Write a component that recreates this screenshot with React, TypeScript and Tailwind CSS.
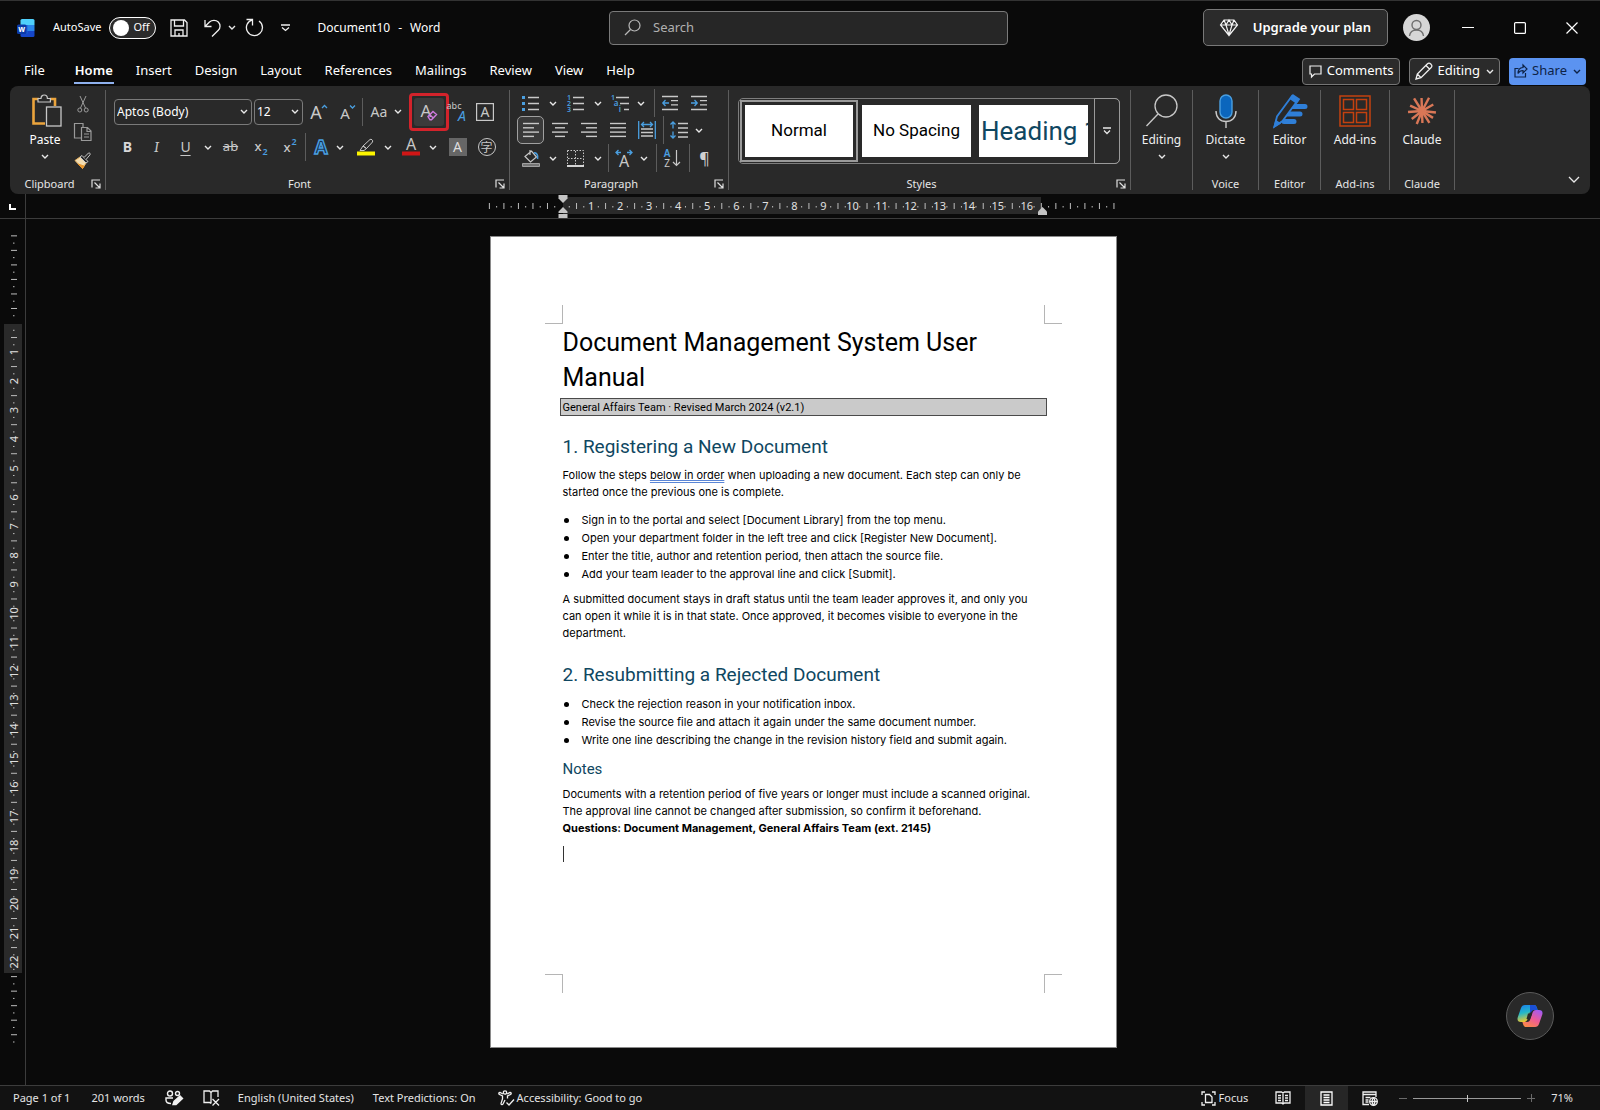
import type { ReactNode } from "react";

const UI = "font-['Noto_Sans','Open_Sans',sans-serif]";
const DISPLAY = "font-[Roboto,'Open_Sans',sans-serif]";
const BODY = "font-[Inter,Roboto,sans-serif]";

const GREY = "#c8c8c8";
const BLUE = "#4a9fe0";
const UI_FACE = "'Noto Sans', sans-serif";

type IconProps = {
  w?: number;
  h?: number;
  children: ReactNode;
  color?: string;
  sw?: number;
};

function Icon({ w = 18, h = 18, children, color = GREY, sw = 1 }: IconProps) {
  return (
    <svg
      width={w}
      height={h}
      viewBox={`0 0 ${w} ${h}`}
      fill="none"
      stroke={color}
      strokeWidth={sw}
      className="shrink-0 overflow-visible"
      aria-hidden="true"
    >
      {children}
    </svg>
  );
}

function Letter({ x, y, size, fill = GREY, children, weight = 400, italic = false }: {
  x: number;
  y: number;
  size: number;
  fill?: string;
  children: string;
  weight?: number;
  italic?: boolean;
}) {
  return (
    <text
      x={x}
      y={y}
      fontSize={size}
      fill={fill}
      stroke="none"
      textAnchor="middle"
      fontWeight={weight}
      fontStyle={italic ? "italic" : "normal"}
      fontFamily={UI_FACE}
    >
      {children}
    </text>
  );
}

function Chevron({ color = "#e8e8e8" }: { color?: string }) {
  return (
    <Icon w={8} h={5} color={color} sw={1.4}>
      <path d="M1 1l3 3 3-3" />
    </Icon>
  );
}

type ToolProps = { label: string; children: ReactNode; className?: string };

function Tool({ label, children, className = "w-[29px]" }: ToolProps) {
  return (
    <button type="button" aria-label={label} className={`flex h-7 shrink-0 items-center justify-center ${className}`}>
      {children}
    </button>
  );
}

function More({ label, className = "w-4" }: { label: string; className?: string }) {
  return (
    <Tool label={label} className={className}>
      <Chevron />
    </Tool>
  );
}

function Rule({ className = "mx-1" }: { className?: string }) {
  return <span className={`h-7 w-px shrink-0 bg-[#5c5c5c] ${className}`} />;
}

function Launcher({ label }: { label: string }) {
  return (
    <button type="button" aria-label={label} className="absolute right-1 bottom-0 flex h-3 items-center">
      <Icon w={10} h={10} color="#e0e0e0" sw={1.2}>
        <path d="M1 8.500V1h8M3.500 3.500l5 5M9 4.500V9H4.500" />
      </Icon>
    </button>
  );
}

type GroupProps = { label: string; className: string; launcher?: boolean; children: ReactNode };

function Group({ label, className, launcher = false, children }: GroupProps) {
  return (
    <section className={`relative mt-1 flex h-[100px] shrink-0 flex-col border-r border-[#5c5c5c] ${className}`}>
      <div className="min-h-0 flex-1">{children}</div>
      <h2 className={`h-3 text-center text-[11px] leading-3 text-[#e6e6e6] ${launcher ? "pr-4" : ""}`}>{label}</h2>
      {launcher && <Launcher label={`${label} settings`} />}
    </section>
  );
}

function WordLogo() {
  return (
    <Icon w={18} h={18}>
      <g stroke="none">
        <path d="M5 0h11a1.500 1.500 0 0 1 1.500 1.500V6H3.500V1.500A1.500 1.500 0 0 1 5 0z" fill="#4fd0fb" />
        <path d="M3.500 6h14v6h-14z" fill="#2a86ea" />
        <path d="M3.500 12h14v4.500A1.500 1.500 0 0 1 16 18H5a1.500 1.500 0 0 1-1.500-1.500z" fill="#1546c8" />
        <path d="M3.500 6h7v8.500h-7z" fill="#1c62d8" />
        <rect x="0" y="5.500" width="9.500" height="9.500" rx="1.500" fill="#0b3aa8" />
      </g>
      <Letter x={4.800} y={13} size={8} fill="#fff" weight={700}>w</Letter>
    </Icon>
  );
}

function TitleBar() {
  return (
    <header className="grid h-[53px] grid-cols-[1fr_minmax(200px,399px)_1fr] items-center pl-[17px]">
      <div className="flex items-center">
        <WordLogo />
        <label className="ml-[18px] flex items-center gap-2 text-[11px]">
          AutoSave
          <input type="checkbox" role="switch" className="sr-only" />
          <span className="flex h-[22px] w-[47px] items-center gap-1 rounded-full border border-white bg-[#2b2b2b] px-[3px]">
            <span className="size-4 shrink-0 rounded-full bg-white" />
            <span>Off</span>
          </span>
        </label>
        <button type="button" aria-label="Save" className="ml-[14px]">
          <Icon w={18} h={18} color="#f0f0f0" sw={1.3}>
            <path d="M1 1h13.500L17 3.500V17H1zM4.500 1v6h9V1M5 17v-6h8v6M9 17v-3" />
          </Icon>
        </button>
        <button type="button" aria-label="Undo" className="ml-4">
          <Icon w={17} h={18} color="#f0f0f0" sw={1.3}>
            <path d="M1 1v6.500h6.500M1 7.500L5.500 3C8 .8 12 .8 14.300 3c2.300 2.400 2.300 6 0 8.300L8 17.500" />
          </Icon>
        </button>
        <button type="button" aria-label="Undo history" className="ml-[7px]">
          <Chevron />
        </button>
        <button type="button" aria-label="Redo" className="ml-[9px]">
          <Icon w={19} h={19} color="#f0f0f0" sw={1.3}>
            <path d="M1.500 1.500H7.500V7.500M7.500 1.800A8 8 0 1 0 14 3" />
          </Icon>
        </button>
        <button type="button" aria-label="Customize toolbar" className="ml-[17px]">
          <Icon w={9} h={8} color="#f0f0f0" sw={1.3}>
            <path d="M0 1h9M1 3.500l3.500 3 3.500-3" />
          </Icon>
        </button>
        <h1 className="ml-[27px] flex gap-2 text-xs">
          <span>Document10</span>
          <span>-</span>
          <span>Word</span>
        </h1>
      </div>
      <div className="flex h-[34px] items-center gap-3 rounded border border-[#7a7a7a] bg-[#262626] px-[14px]">
        <Icon w={17} h={17} color="#b8b8b8" sw={1.200}>
          <circle cx="10.500" cy="6.500" r="5.500" />
          <path d="M6.500 10.500L1 16" />
        </Icon>
        <input
          aria-label="Search"
          placeholder="Search"
          className="min-w-0 flex-1 bg-transparent text-[13px] outline-none placeholder:text-[#b0b0b0]"
        />
      </div>
      <div className="flex items-center justify-end pr-[2px]">
        <button
          type="button"
          className="flex h-[37px] items-center gap-[15px] rounded-[5px] border border-[#787878] bg-[#2b2b2b] px-4 text-[13px] font-semibold"
        >
          <Icon w={18} h={17} color="#f4f4f4" sw={1.200}>
            <path d="M4 1h10l3.500 5L9 16.500.5 6zM.5 6h17M4 1l2 5 3 10 3-10 2-5M6 6l3-5 3 5" />
          </Icon>
          Upgrade your plan
        </button>
        <button type="button" aria-label="Account" className="ml-[15px] flex size-[27px] items-center justify-center rounded-full bg-[#d6d6d6]">
          <Icon w={17} h={18} color="#6e6e6e" sw={1.400}>
            <circle cx="8.500" cy="6" r="4.500" />
            <path d="M1.500 17c.5-4 3.500-6 7-6s6.500 2 7 6" />
          </Icon>
        </button>
        <button type="button" aria-label="Minimize" className="ml-3 flex h-8 w-[52px] items-center justify-center">
          <Icon w={12} h={12} color="#fff"><path d="M0 5.500h12" /></Icon>
        </button>
        <button type="button" aria-label="Maximize" className="flex h-8 w-[52px] items-center justify-center">
          <Icon w={12} h={12} color="#fff" sw={1.200}><rect x=".6" y=".6" width="10.800" height="10.800" rx="1" /></Icon>
        </button>
        <button type="button" aria-label="Close" className="flex h-8 w-[52px] items-center justify-center">
          <Icon w={12} h={12} color="#fff" sw={1.200}><path d="M.5.5l11 11M11.500.5l-11 11" /></Icon>
        </button>
      </div>
    </header>
  );
}

const tabs = ["File", "Home", "Insert", "Design", "Layout", "References", "Mailings", "Review", "View", "Help"];

function TabBar() {
  return (
    <nav className="flex h-8 items-center gap-px pt-0.5 pr-[14px] pl-[13px] text-[13px]">
      {tabs.map((tab) => (
        <button
          key={tab}
          type="button"
          className={`relative h-6 px-[11px] ${tab === "File" ? "mr-[7px]" : ""} ${tab === "Home" ? "font-semibold" : ""}`}
        >
          {tab}
          {tab === "Home" && <span className="absolute inset-x-[10px] -bottom-px h-0.5 bg-[#8fb1ee]" />}
        </button>
      ))}
      <div className="ml-auto flex items-center gap-[9px]">
        <button type="button" className="flex h-[27px] items-center gap-[5px] rounded-[4px] border border-[#757575] bg-[#2b2b2b] px-[6px]">
          <Icon w={13} h={13} color="#f0f0f0" sw={1.200}>
            <path d="M1 1h11v8H5.500L2.500 12V9H1z" />
          </Icon>
          Comments
        </button>
        <button type="button" className="flex h-[27px] items-center gap-1 rounded-[4px] border border-[#757575] bg-[#2b2b2b] px-[5px]">
          <Icon w={18} h={18} color="#f0f0f0" sw={1.300}>
            <path d="M1 17l1.300-5L12.500 1.800a2 2 0 0 1 3 0l.7.700a2 2 0 0 1 0 3L6 15.700zM11 3.500l3.500 3.500M2.300 12L6 15.700" />
          </Icon>
          Editing
          <span className="ml-[2px]"><Chevron /></span>
        </button>
        <button type="button" className="flex h-[27px] items-center gap-1 rounded-[4px] bg-[#5b93f1] px-[5px] text-[#0e2347]">
          <Icon w={14} h={14} color="#0e2347" sw={1.200}>
            <path d="M4.500 4.500H1V13h10.500V9M9 1l4 4-4 4V6.500C6.500 6.500 5 7.500 4 9.500c0-3.500 2-5.800 5-6z" />
          </Icon>
          Share
          <span className="ml-[2px]"><Chevron color="#0e2347" /></span>
        </button>
      </div>
    </nav>
  );
}

function ClipboardGroup() {
  return (
    <Group label="Clipboard" className="w-[96px]" launcher>
      <div className="flex pl-[14px]">
        <button type="button" className="flex w-[42px] flex-col items-center pt-1 text-xs">
          <Icon w={30} h={34}>
            <path d="M9 5H3.500v24.500H15M20 5h5v7" stroke="#eba43c" strokeWidth="2.600" />
            <path d="M8 8V4.500h3C11 2.500 12.500 1 14.200 1s3.200 1.500 3.200 3.500h3V8z" fill="#292929" strokeWidth="1.200" />
            <rect x="16.500" y="13" width="14.500" height="19" fill="#292929" strokeWidth="1.300" />
          </Icon>
          <span className="mt-1 mb-[6px] leading-4">Paste</span>
          <Chevron />
        </button>
        <div className="ml-[2px] flex flex-col">
          <Tool label="Cut">
            <Icon w={12} h={17} color="#9a9a9a">
              <path d="M3 0l5.500 12M9 0L3.500 12" />
              <circle cx="2.800" cy="14" r="2" />
              <circle cx="9.200" cy="14" r="2" />
            </Icon>
          </Tool>
          <Tool label="Copy">
            <Icon w={18} h={18} color="#9a9a9a" sw={1.200}>
              <path d="M7 15H.5V.5H9V4" />
              <path d="M7.500 4.500h6l3.500 3.500v9.500H7.500zM13 4.500V8.500h4M10 11h5M10 14h5" />
            </Icon>
          </Tool>
          <Tool label="Format painter">
            <Icon w={17} h={17}>
              <path d="M1 8.500l5-3.500 6 6-3.500 5.500z" fill="#f2dcb0" stroke="#e9b565" />
              <path d="M4 12l6 2-1.500 2.500z" fill="#e8962c" stroke="#e8962c" />
              <path d="M6 5l2-1.500 6 6L12 11z" fill="#292929" />
              <path d="M10 5.500L14.500 1c.8-.6 2.300.6 1.500 1.800L12 7.500" fill="#292929" />
            </Icon>
          </Tool>
        </div>
      </div>
    </Group>
  );
}

function FontGroup() {
  return (
    <Group label="Font" className="w-[404px]" launcher>
      <div className="flex h-[43px] items-center pl-2">
        <div className="relative flex h-[26px] w-[138px] items-center rounded-[4px] border border-[#7a7a7a]">
          <select aria-label="Font family" className="h-full w-full appearance-none bg-transparent pl-[2px] text-xs text-white">
            <option>Aptos (Body)</option>
          </select>
          <span className="pointer-events-none absolute right-[3px]"><Chevron /></span>
        </div>
        <div className="relative ml-[2px] flex h-[26px] w-[49px] items-center rounded-[4px] border border-[#7a7a7a]">
          <select aria-label="Font size" className="h-full w-full appearance-none bg-transparent pl-[2px] text-xs text-white">
            <option>12</option>
          </select>
          <span className="pointer-events-none absolute right-[3px]"><Chevron /></span>
        </div>
        <Tool label="Grow font" className="ml-px w-[29px]">
          <Icon w={17} h={16}>
            <Letter x={6} y={15} size={18}>A</Letter>
            <path d="M12 4l2.500-2.500L17 4" stroke={BLUE} strokeWidth="1.300" />
          </Icon>
        </Tool>
        <Tool label="Shrink font">
          <Icon w={17} h={16}>
            <Letter x={6} y={15} size={15}>A</Letter>
            <path d="M11 1.500L13.500 4 16 1.500" stroke={BLUE} strokeWidth="1.300" />
          </Icon>
        </Tool>
        <Rule className="mx-0" />
        <Tool label="Change case" className="ml-[5px] w-[22px]">
          <span className="text-sm text-[#c8c8c8]">Aa</span>
        </Tool>
        <More label="Change case options" />
        <div className="ml-[3px] rounded-[4px] border-3 border-[#d3232b] p-[2px]">
          <Tool label="Clear formatting" className="w-[30px] rounded-[3px] bg-[#3b3b3b]">
            <Icon w={18} h={18}>
              <Letter x={6} y={14} size={17}>A</Letter>
              <path d="M8 13.500L13 8.500l3.500 3-5 5.300H10zM9.800 11.800l3.500 3.200" stroke="#cf7be0" strokeWidth="1.400" />
            </Icon>
          </Tool>
        </div>
        <Tool label="Phonetic guide" className="w-[19px]">
          <Icon w={19} h={18}>
            <Letter x={5} y={6} size={9}>abc</Letter>
            <Letter x={13} y={18} size={14} fill={BLUE} italic>A</Letter>
          </Icon>
        </Tool>
        <Tool label="Character border" className="ml-0.5 w-[29px]">
          <Icon w={18} h={18}>
            <rect x=".6" y=".6" width="16.800" height="16.800" strokeWidth="1.200" />
            <Letter x={9} y={14} size={14}>A</Letter>
          </Icon>
        </Tool>
      </div>
      <div className="flex h-7 items-center pl-[7px]">
        <Tool label="Bold"><b className="text-sm text-[#d8d8d8]">B</b></Tool>
        <Tool label="Italic"><i className="font-serif text-[15px] text-[#c8c8c8]">I</i></Tool>
        <Tool label="Underline"><span className="text-sm text-[#c8c8c8] underline underline-offset-3">U</span></Tool>
        <More label="Underline options" />
        <Tool label="Strikethrough"><s className="text-[13px] text-[#c8c8c8]">ab</s></Tool>
        <Tool label="Subscript">
          <Icon w={14} h={14}>
            <Letter x={5} y={11} size={13} weight={500}>x</Letter>
            <Letter x={12} y={15} size={9} fill={BLUE} weight={600}>2</Letter>
          </Icon>
        </Tool>
        <Tool label="Superscript">
          <Icon w={14} h={14}>
            <Letter x={5} y={12} size={13} weight={500}>x</Letter>
            <Letter x={12} y={5} size={9} fill={BLUE} weight={600}>2</Letter>
          </Icon>
        </Tool>
        <Rule className="mx-0.5" />
        <Tool label="Text effects" className="w-[26px]">
          <Icon w={18} h={18}>
            <text x="9" y="16" fontSize="19" textAnchor="middle" fontWeight="700" fontFamily={UI_FACE} fill="#16324a" stroke={BLUE} strokeWidth="1.400">A</text>
          </Icon>
        </Tool>
        <More label="Text effects options" className="w-3" />
        <Tool label="Highlight color" className="ml-[5px] w-[29px]">
          <Icon w={18} h={18}>
            <path d="M6 8l7-6.500c1-.9 3.500.8 2.500 2.500L9.500 10.500zM6 8l3.500 2.500L7 12.500H3z" />
            <path d="M0 15.500h18" stroke="#fdf500" strokeWidth="4" />
          </Icon>
        </Tool>
        <More label="Highlight options" />
        <Tool label="Font color">
          <Icon w={18} h={18}>
            <Letter x={9} y={12} size={16}>A</Letter>
            <path d="M0 15.500h18" stroke="#d01616" strokeWidth="4" />
          </Icon>
        </Tool>
        <More label="Font color options" />
        <Tool label="Character shading" className="ml-0.5 w-[29px]">
          <span className="flex size-[18px] items-center justify-center bg-[#666] text-sm text-[#ddd]">A</span>
        </Tool>
        <Tool label="Enclose characters">
          <span className="flex size-[18px] items-center justify-center rounded-full border border-[#c8c8c8] font-['Noto_Sans_CJK_KR',sans-serif] text-xs leading-none text-[#c8c8c8]">字</span>
        </Tool>
      </div>
    </Group>
  );
}

function Lines({ rows }: { rows: [number, number][] }) {
  return (
    <Icon w={16} h={16} sw={1.400}>
      {rows.map(([from, to], i) => (
        <path key={i} d={`M${from} ${1.500 + i * 4.300}H${to}`} />
      ))}
    </Icon>
  );
}

function ParagraphGroup() {
  return (
    <Group label="Paragraph" className="w-[219px]" launcher>
      <div className="flex h-[26px] items-center pl-[6px]">
        <Tool label="Bullets">
          <Icon w={17} h={17} sw={1.400}>
            <path d="M6 2.500h11M6 8.500h11M6 14.500h11" />
            <path d="M0 1h3v3H0zM0 7h3v3H0zM0 13h3v3H0z" fill={BLUE} stroke="none" />
          </Icon>
        </Tool>
        <More label="Bullet options" />
        <Tool label="Numbering">
          <Icon w={17} h={17} sw={1.400}>
            <path d="M6 2.500h11M6 8.500h11M6 14.500h11" />
            <Letter x={2} y={5} size={7} fill={BLUE} weight={600}>1</Letter>
            <Letter x={2} y={11} size={7} fill={BLUE} weight={600}>2</Letter>
            <Letter x={2} y={17} size={7} fill={BLUE} weight={600}>3</Letter>
          </Icon>
        </Tool>
        <More label="Numbering options" />
        <Tool label="Multilevel list">
          <Icon w={17} h={17} sw={1.400}>
            <path d="M4 2.500h13M8 8.500h9M12 14.500h5" />
            <Letter x={1} y={5} size={7} fill={BLUE} weight={600}>1</Letter>
            <Letter x={4} y={11} size={8} fill={BLUE} weight={600}>a</Letter>
            <Letter x={8} y={17} size={8} fill={BLUE} weight={600}>i</Letter>
          </Icon>
        </Tool>
        <More label="Multilevel options" className="w-3" />
        <Rule className="ml-[7px]" />
        <Tool label="Decrease indent">
          <Icon w={16} h={16} sw={1.300}>
            <path d="M0 1.500h16M9 5.700h7M9 9.900h7M0 14.500h16" />
            <path d="M7 8H1M3.500 5L.8 8l2.700 3" stroke={BLUE} />
          </Icon>
        </Tool>
        <Tool label="Increase indent">
          <Icon w={16} h={16} sw={1.300}>
            <path d="M0 1.500h16M9 5.700h7M9 9.900h7M0 14.500h16" />
            <path d="M0 8h6M3.500 5l2.700 3-2.700 3" stroke={BLUE} />
          </Icon>
        </Tool>
      </div>
      <div className="flex h-7 items-center pl-[7px]">
        <Tool label="Align left" className="mr-px w-[27px] rounded-[5px] border border-[#a0a0a0] bg-[#3a3a3a]">
          <Lines rows={[[0, 16], [0, 11], [0, 16], [0, 11]]} />
        </Tool>
        <Tool label="Center"><Lines rows={[[0, 16], [3, 13], [0, 16], [3, 13]]} /></Tool>
        <Tool label="Align right"><Lines rows={[[0, 16], [5, 16], [0, 16], [5, 16]]} /></Tool>
        <Tool label="Justify"><Lines rows={[[0, 16], [0, 16], [0, 16], [0, 16]]} /></Tool>
        <Tool label="Distributed">
          <Icon w={18} h={18} sw={1.300}>
            <path d="M3 8h12M3 11.500h12M3 15h12" />
            <path d="M.7 0v18M17.300 0v18M3.500 3.500h11M6 1L3.500 3.500 6 6M12 1l2.500 2.500L12 6" stroke={BLUE} />
          </Icon>
        </Tool>
        <Rule className="ml-0.5" />
        <Tool label="Line spacing">
          <Icon w={18} h={18} sw={1.300}>
            <path d="M8 2.500h10M8 7h10M8 11.500h10M8 16h10" />
            <path d="M3 1v6.500M.5 3.500L3 1l2.500 2.500M3 10.500V17M.5 14.500L3 17l2.500-2.500" stroke={BLUE} />
          </Icon>
        </Tool>
        <More label="Line spacing options" className="w-3" />
      </div>
      <div className="flex h-7 items-center pl-[6px]">
        <Tool label="Shading">
          <Icon w={18} h={18}>
            <path d="M3 7.500L9.500 2l5 6-6 5zM8 1v5" strokeWidth="1.200" />
            <path d="M12 4c2.500-.5 4.500 2 3.500 6" stroke={BLUE} strokeWidth="1.600" />
            <path d="M.5 14.500h17v3H.5z" fill="#757575" stroke="#a0a0a0" />
          </Icon>
        </Tool>
        <More label="Shading options" />
        <Tool label="Borders">
          <Icon w={17} h={17}>
            <path d="M.5.5h16v15M.5.5v15M8.500 1v14M1 8.500h15" strokeDasharray="1.500 1.500" />
            <path d="M0 16h17" strokeWidth="1.600" stroke="#fff" />
          </Icon>
        </Tool>
        <More label="Border options" />
        <Rule className="ml-[2px]" />
        <Tool label="Character scale">
          <Icon w={18} h={18}>
            <Letter x={9} y={18} size={16}>A</Letter>
            <path d="M1 3.500h5M3.500 1L1 3.500 3.500 6M12 3.500H17M14.500 1L17 3.500 14.500 6" stroke={BLUE} strokeWidth="1.300" />
          </Icon>
        </Tool>
        <More label="Character scale options" className="w-3" />
        <Rule className="ml-[6px]" />
        <Tool label="Sort">
          <Icon w={18} h={18}>
            <Letter x={4} y={8} size={10} fill={BLUE} weight={600}>A</Letter>
            <Letter x={4} y={18} size={10}>Z</Letter>
            <path d="M13.500 1v15.500M10 13l3.500 3.500L17 13" strokeWidth="1.200" />
          </Icon>
        </Tool>
        <Rule className="ml-[3px]" />
        <Tool label="Show marks"><span className="text-base text-[#d0d0d0]">¶</span></Tool>
      </div>
    </Group>
  );
}

function StylesGroup() {
  return (
    <Group label="Styles" className="w-[402px]" launcher>
      <div className={`mt-2 ml-[9px] flex h-[66px] w-[382px] rounded-[5px] border border-[#7d7d7d] ${DISPLAY}`}>
        <button type="button" className="m-[1px] w-[118px] border-2 border-[#9a9a9a] p-[3px]">
          <span className="flex h-[52px] items-center justify-center bg-white text-[17px] text-black">Normal</span>
        </button>
        <button type="button" className="my-[6px] ml-[3px] w-[109px] bg-white text-[17px] text-black">No Spacing</button>
        <button type="button" className="my-[6px] ml-2 w-[109px] overflow-hidden bg-white pl-[2px] text-left text-[26px] leading-[52px] whitespace-nowrap text-[#0f4761]">
          Heading 1
        </button>
        <button type="button" aria-label="More styles" className="-my-px -mr-px ml-auto flex w-[26px] items-center justify-center rounded-r-[5px] border border-[#9a9a9a]">
          <Icon w={8} h={8} color="#e8e8e8" sw={1.300}>
            <path d="M0 1h8M1 3.500l3 3 3-3" />
          </Icon>
        </button>
      </div>
    </Group>
  );
}

function BigButton({ label, more = false, children }: { label: string; more?: boolean; children: ReactNode }) {
  return (
    <button type="button" className="flex w-full flex-col items-center pt-[3px] text-xs text-[#f0f0f0]">
      <span className="flex h-[35px] items-center">{children}</span>
      <span className="mt-1 leading-4">{label}</span>
      {more && <span className="mt-[6px] flex"><Chevron /></span>}
    </button>
  );
}

const rays = [
  [6, 14], [32, 13], [58, 14], [88, 12], [112, 14], [142, 13], [176, 14], [204, 13], [238, 15], [268, 13], [298, 15], [330, 13],
];

function Ribbon() {
  return (
    <div className="mx-[10px] flex h-[108px] rounded-lg bg-[#292929]">
      <ClipboardGroup />
      <FontGroup />
      <ParagraphGroup />
      <StylesGroup />
      <Group label="" className="w-[62px]">
        <BigButton label="Editing" more>
          <Icon w={34} h={34} sw={1.300}>
            <circle cx="21" cy="12" r="11" />
            <path d="M13 20L1.500 32" />
          </Icon>
        </BigButton>
      </Group>
      <Group label="Voice" className="w-[66px]">
        <BigButton label="Dictate" more>
          <Icon w={22} h={34} sw={1.400}>
            <rect x="5" y="1" width="12" height="23" rx="6" fill="#0b66bd" stroke="#4a9fe0" />
            <path d="M1 17c0 6.500 4 10.500 10 10.500S21 23.500 21 17M11 27.500V34" />
          </Icon>
        </BigButton>
      </Group>
      <Group label="Editor" className="w-[62px]">
        <BigButton label="Editor">
          <Icon w={34} h={34} color="#2f7fd8" sw={1.800}>
            <path d="M18 12.500h14M14 20h13M11 27.500h10" strokeWidth="5" strokeLinecap="round" />
            <path d="M1.500 32.500L4 22.500 19 2l6 4L9.500 27z" fill="#292929" />
            <path d="M17.500 4.500L20 1.200l6 4-2.500 3.500zM1.500 32.500L3 27l3.500 2.500z" fill="#2f7fd8" />
          </Icon>
        </BigButton>
      </Group>
      <Group label="Add-ins" className="w-[69px]">
        <BigButton label="Add-ins">
          <Icon w={32} h={32} color="#c4410f" sw={1.500}>
            <path d="M1 1h30v30H1zM4.500 4.500h10v10h-10zM17.500 4.500h10v10h-10zM4.500 17.500h10v10h-10zM17.500 17.500h10v10h-10z" />
          </Icon>
        </BigButton>
      </Group>
      <Group label="Claude" className="w-[65px]">
        <BigButton label="Claude">
          <Icon w={30} h={30} color="#d97757" sw={2.400}>
            <circle cx="15" cy="15" r="3" fill="#d97757" />
            {rays.map(([deg, len]) => (
              <path key={deg} d={`M15 15h${len}`} transform={`rotate(${deg} 15 15)`} />
            ))}
          </Icon>
        </BigButton>
      </Group>
      <button type="button" aria-label="Collapse ribbon" className="mr-[10px] mb-[11px] ml-auto self-end">
        <Icon w={12} h={7} color="#e8e8e8" sw={1.300}>
          <path d="M1 1l5 5 5-5" />
        </Icon>
      </button>
    </div>
  );
}

const CM = 29.05;

function HorizontalRuler() {
  const quarters = Array.from({ length: 87 }, (_, i) => i - 10);
  return (
    <svg width="626" height="24" className="shrink-0 overflow-visible" aria-hidden="true">
      <rect x="73" y="3" width="478" height="17" fill="#2a2a2a" />
      {quarters.map((q) => {
        const x = 72 + (q * CM) / 4;
        const cm = q / 4;
        if (q === 0) return null;
        if (cm >= 1 && cm <= 16 && Number.isInteger(cm)) {
          return (
            <text key={q} x={x} y="16" fontSize="11" textAnchor="middle" fill="#e0e0e0" fontFamily={UI_FACE}>{cm}</text>
          );
        }
        return q % 2 === 0
          ? <rect key={q} x={x - 0.500} y="9" width="1" height="6" fill="#bdbdbd" />
          : <rect key={q} x={x - 0.500} y="12" width="1" height="1.500" fill="#bdbdbd" />;
      })}
      <g fill="#c4c4c4">
        <path d="M68.500 1h9v3.500L73 9l-4.500-4.500z" />
        <path d="M73 13l4.500 4.500V19h-9v-1.500zM68.500 20h9v4h-9z" />
        <path d="M552.500 13l4.500 4.500V21h-9v-3.500z" />
      </g>
    </svg>
  );
}

function VerticalRuler() {
  const quarters = Array.from({ length: 112 }, (_, i) => i - 12);
  return (
    <svg width="25" height="866" className="shrink-0" aria-hidden="true">
      <rect x="4" y="105" width="18" height="649" fill="#2a2a2a" />
      {quarters.map((q) => {
        const y = 104 + (q * CM) / 4;
        const cm = q / 4;
        if (q === 0) return null;
        if (cm >= 1 && cm <= 22 && Number.isInteger(cm)) {
          return (
            <text key={q} fontSize="11" textAnchor="middle" fill="#e0e0e0" fontFamily={UI_FACE} transform={`translate(18 ${y}) rotate(-90)`}>{cm}</text>
          );
        }
        return q % 2 === 0
          ? <rect key={q} x="11" y={y - 0.500} width="6" height="1" fill="#bdbdbd" />
          : <rect key={q} x="13" y={y - 0.500} width="1.500" height="1" fill="#bdbdbd" />;
      })}
    </svg>
  );
}

function Bullets({ items, className }: { items: string[]; className: string }) {
  return (
    <ul className={`leading-[18px] ${className}`}>
      {items.map((item) => (
        <li key={item} className="flex items-center">
          <span className="mr-[13px] ml-px size-[5px] rounded-full bg-black" />
          {item}
        </li>
      ))}
    </ul>
  );
}

function Page() {
  return (
    <article className={`relative min-h-[812px] w-[627px] shrink-0 border border-[#8a8a8a] bg-white px-[72px] pt-[87px] text-[11px] leading-[17px] whitespace-nowrap text-black ${BODY}`}>
      <span className="absolute top-[68px] left-[54px] h-[19px] w-[18px] border-r border-b border-[#b5b5b5]" />
      <span className="absolute top-[68px] right-[54px] h-[19px] w-[18px] border-b border-l border-[#b5b5b5]" />
      <span className="absolute bottom-[54px] left-[54px] h-[19px] w-[18px] border-t border-r border-[#b5b5b5]" />
      <span className="absolute right-[54px] bottom-[54px] h-[19px] w-[18px] border-t border-l border-[#b5b5b5]" />

      <h1 className={`pt-px text-[25px] leading-[35px] ${DISPLAY}`}>
        Document Management System User
        <br />
        Manual
      </h1>
      <p className={`-mx-[3px] mt-[3px] border border-[#4a4a4a] bg-[#cacaca] px-[2px] pt-px leading-[15px] ${DISPLAY}`}>
        General Affairs Team · Revised March 2024 (v2.1)
      </p>

      <h2 className={`mt-[19px] text-[19px] leading-6 text-[#0f4761] ${DISPLAY}`}>1. Registering a New Document</h2>
      <p className="mt-2">
        Follow the steps <span className="underline decoration-[#5b86d6] decoration-double underline-offset-1">below in order</span> when uploading a new document. Each step can only be
        <br />
        started once the previous one is complete.
      </p>
      <Bullets
        className="mt-[10px]"
        items={[
          "Sign in to the portal and select [Document Library] from the top menu.",
          "Open your department folder in the left tree and click [Register New Document].",
          "Enter the title, author and retention period, then attach the source file.",
          "Add your team leader to the approval line and click [Submit].",
        ]}
      />
      <p className="mt-2">
        A submitted document stays in draft status until the team leader approves it, and only you
        <br />
        can open it while it is in that state. Once approved, it becomes visible to everyone in the
        <br />
        department.
      </p>

      <h2 className={`mt-[21px] text-[19px] leading-6 text-[#0f4761] ${DISPLAY}`}>2. Resubmitting a Rejected Document</h2>
      <Bullets
        className="mt-2"
        items={[
          "Check the rejection reason in your notification inbox.",
          "Revise the source file and attach it again under the same document number.",
          "Write one line describing the change in the revision history field and submit again.",
        ]}
      />
      <h3 className={`mt-[10px] text-[15px] leading-5 text-[#0f4761] ${DISPLAY}`}>Notes</h3>
      <p className="mt-[7px]">
        Documents with a retention period of five years or longer must include a scanned original.
        <br />
        The approval line cannot be changed after submission, so confirm it beforehand.
        <br />
        <strong>Questions: Document Management, General Affairs Team (ext. 2145)</strong>
      </p>
      <span className="mt-[9px] block h-4 w-px bg-[#333]" />
    </article>
  );
}

function Copilot() {
  return (
    <button type="button" aria-label="Copilot" className="absolute right-[46px] bottom-[45px] flex size-12 items-center justify-center rounded-full border border-[#5a5a5a] bg-[#292929]">
      <svg width="26" height="24" viewBox="0 0 26 24" aria-hidden="true">
        <defs>
          <linearGradient id="cpA" x1="0" y1="0" x2="0.300" y2="1">
            <stop offset="0" stopColor="#1b7df0" />
            <stop offset=".5" stopColor="#23b7c9" />
            <stop offset="1" stopColor="#f1c92b" />
          </linearGradient>
          <linearGradient id="cpB" x1="0.800" y1="0" x2="0.200" y2="1">
            <stop offset="0" stopColor="#a35bf2" />
            <stop offset=".5" stopColor="#ee5b96" />
            <stop offset="1" stopColor="#fb8a45" />
          </linearGradient>
        </defs>
        <path d="M8 1h9c2 0 2.500 1.500 3 3l.6 2H16c-2 0-2.800 1-3.400 3l-2 6c-.7 2-1.600 3-3.600 3H4c-3 0-4-2-3.300-4.500L4 4C4.700 2 6 1 8 1z" fill="url(#cpA)" />
        <path d="M18 23H9c-2 0-2.500-1.500-3-3l-.6-2H10c2 0 2.800-1 3.400-3l2-6c.7-2 1.600-3 3.600-3h3c3 0 4 2 3.300 4.500L22 20c-.7 2-2 3-4 3z" fill="url(#cpB)" />
        <path d="M13 1h4c2 0 2.500 1.500 3 3l.6 2H16l-3 3z" fill="#1a4fd6" />
        <path d="M11 9.500h4.200L13 15h-3.500z" fill="#292929" />
      </svg>
    </button>
  );
}

function StatusBar() {
  return (
    <footer className="flex h-[25px] items-center border-t border-[#3c3c3c] bg-[#121212] pr-[27px] pl-[13px] text-[11px] text-[#e4e4e4]">
      <span>Page 1 of 1</span>
      <span className="ml-[21px]">201 words</span>
      <button type="button" aria-label="Editor status" className="ml-5">
        <Icon w={18} h={16} color="#f0f0f0" sw={1.400}>
          <circle cx="5" cy="3.500" r="2.500" />
          <circle cx="12.500" cy="3.500" r="2" />
          <path d="M8 8H1v2c0 2 2 3.500 5 3.500" />
          <path d="M8 14.500l1-3L15 6l2.500 2.500-6.500 6z" fill="#f0f0f0" />
        </Icon>
      </button>
      <button type="button" aria-label="Proofing" className="ml-5">
        <Icon w={17} h={16} color="#f0f0f0" sw={1.300}>
          <path d="M8 13.500L6.500 12.500H1V1h5.500L8 2.500 9.500 1H15v6M8 2.500v11M9.500 9l6.500 6.500M16 9l-6.500 6.500" />
        </Icon>
      </button>
      <span className="ml-[18px]">English (United States)</span>
      <span className="ml-[19px]">Text Predictions: On</span>
      <span className="ml-[22px] flex items-center gap-[3px]">
        <Icon w={16} h={16} color="#f0f0f0" sw={1.300}>
          <circle cx="7" cy="2.500" r="1.700" />
          <path d="M5 4L2 2.500C.5 2.500.5 4 1.500 4.500L4.500 6v3L3 13.500c0 1.500 1.500 1.500 2 .5l2-4M9 4l3-1.500c1.500 0 1.500 1.500.5 2L9.500 6v2.500M8.500 12.500l2.500 2.500 5-5.500" />
        </Icon>
        Accessibility: Good to go
      </span>
      <button type="button" className="ml-auto flex items-center gap-[3px]">
        <Icon w={15} h={15} color="#f0f0f0" sw={1.300}>
          <path d="M4 1H1v3M11 1h3v3M4 14H1v-3M11 14h3v-3M4.500 3.500h4l2.500 2.500v5.500H4.500z" />
        </Icon>
        Focus
      </button>
      <button type="button" aria-label="Read mode" className="ml-[27px]">
        <Icon w={16} h={14} color="#f0f0f0" sw={1.300}>
          <path d="M8 13l-1.500-1H1V1h5.500L8 2l1.500-1H15v11H9.500zM8 2v11M3 4.500h3M3 7h3M3 9.500h3M10 4.500h3M10 7h3M10 9.500h3" />
        </Icon>
      </button>
      <button type="button" aria-label="Print layout" className="ml-[14px] flex h-6 w-[43px] items-center justify-center bg-[#262626]">
        <Icon w={13} h={15} color="#fff" sw={1.300}>
          <path d="M1 1h11v13H1zM3.500 4h6M3.500 6.500h6M3.500 9h6M3.500 11.500h6" />
        </Icon>
      </button>
      <button type="button" aria-label="Web layout" className="ml-[14px]">
        <Icon w={16} h={15} color="#f0f0f0" sw={1.300}>
          <path d="M7 13.500H1V1h13v5M1 3.500h13M3.500 6.500h5M3.500 9h3M3.500 11h3" />
          <circle cx="11.500" cy="10.500" r="3.800" />
          <path d="M7.700 10.500h7.600M11.500 6.700c-2 2.500-2 5 0 7.600 2-2.600 2-5.100 0-7.600" />
        </Icon>
      </button>
      <button type="button" aria-label="Zoom out" className="ml-[21px]">
        <Icon w={8} h={8} color="#6a6a6a"><path d="M0 4.500h8" /></Icon>
      </button>
      <input
        type="range"
        aria-label="Zoom"
        min={0}
        max={100}
        defaultValue={50}
        className="mx-[6px] h-px w-[108px] appearance-none bg-[#9a9a9a] [&::-webkit-slider-thumb]:h-[7px] [&::-webkit-slider-thumb]:w-px [&::-webkit-slider-thumb]:appearance-none [&::-webkit-slider-thumb]:bg-[#c8c8c8]"
      />
      <button type="button" aria-label="Zoom in">
        <Icon w={8} h={8} color="#6a6a6a"><path d="M0 4.500h8M4.500 0v8" /></Icon>
      </button>
      <span className="ml-4">71%</span>
    </footer>
  );
}

export default function App() {
  return (
    <div className={`flex min-h-screen flex-col border-t border-[#333] bg-[#0a0a0a] text-white ${UI}`}>
      <TitleBar />
      <TabBar />
      <Ribbon />
      <div className="flex h-[25px] border-b border-[#3c3c3c]">
        <div className="flex w-[26px] shrink-0 items-center justify-center border-r border-[#3c3c3c]">
          <Icon w={7} h={7} color="#fff" sw={2}><path d="M1 7V1" /><path d="M1 6h6" /></Icon>
        </div>
        <div className="flex min-w-0 flex-1 justify-center pr-5">
          <HorizontalRuler />
        </div>
      </div>
      <main className="relative flex flex-1">
        <div className="w-[26px] shrink-0 border-r border-[#3c3c3c]">
          <VerticalRuler />
        </div>
        <div className="flex min-w-0 flex-1 items-start justify-center pt-[17px] pr-5">
          <Page />
        </div>
        <Copilot />
      </main>
      <StatusBar />
    </div>
  );
}
